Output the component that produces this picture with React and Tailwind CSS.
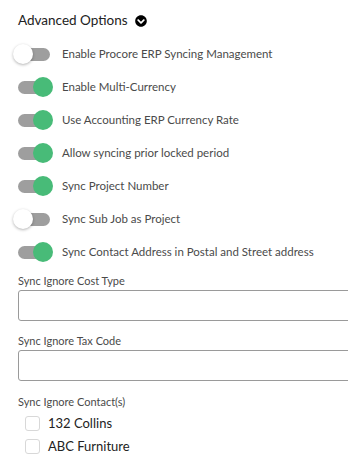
import { FaChevronCircleDown } from "react-icons/fa";

const toggles = [
	{ label: "Enable Procore ERP Syncing Management", on: false },
	{ label: "Enable Multi-Currency", on: true },
	{ label: "Use Accounting ERP Currency Rate", on: true },
	{ label: "Allow syncing prior locked period", on: true },
	{ label: "Sync Project Number", on: true },
	{ label: "Sync Sub Job as Project", on: false },
	{ label: "Sync Contact Address in Postal and Street address", on: true },
];

const Toggle = ({ on }) => (
	<div className="relative w-[40px] h-[20px] flex items-center shrink-0">
		<div className="ml-[6px] w-[32px] h-[13px] rounded-full bg-[#9e9e9e]" />
		{on ? (
			<div className="absolute left-[21px] top-0 w-[20px] h-[20px] rounded-full bg-[#48bb78]" />
		) : (
			<div className="absolute left-[1px] top-0 w-[20px] h-[20px] rounded-full bg-white shadow-[0_1px_3px_rgba(0,0,0,0.3)]" />
		)}
	</div>
);

export default function App() {
	return (
		<div
			className="w-[348px] h-[460px] overflow-hidden bg-white text-[#4a4a4a]"
			style={{ fontFamily: "Lato, 'Open Sans', sans-serif" }}>
			<div className="flex items-center gap-[7px] pl-[18px] pt-[10px] h-[30px]">
				<span className="text-[13.5px] text-[#222]">Advanced Options</span>
				<FaChevronCircleDown className="text-[12px] text-black mt-[1px]" />
			</div>

			<div className="flex flex-col gap-[13px] pl-[12px] mt-[14px]">
				{toggles.map((t) => (
					<div key={t.label} className="flex items-center gap-[10px] h-[20px]">
						<Toggle on={t.on} />
						<span className="text-[11.5px] text-[#4a4a4a] whitespace-nowrap">
							{t.label}
						</span>
					</div>
				))}
			</div>

			<div className="pl-[18px] mt-[12px]">
				<div className="text-[11px] text-[#4a4a4a] leading-[14px]">
					Sync Ignore Cost Type
				</div>
				<div className="mt-[2px] w-[360px] h-[31px] border border-[#9a9a9a] rounded-[3px]" />

				<div className="mt-[13px] text-[11px] text-[#4a4a4a] leading-[14px]">
					Sync Ignore Tax Code
				</div>
				<div className="mt-[2px] w-[360px] h-[31px] border border-[#9a9a9a] rounded-[3px]" />

				<div className="mt-[14px] text-[11px] text-[#4a4a4a] leading-[14px]">
					Sync Ignore Contact(s)
				</div>
				<div className="flex flex-col gap-[8px] mt-[7px] pl-[7px]">
					{["132 Collins", "ABC Furniture", ""].map((c, i) => (
						<div key={i} className="flex items-center gap-[8px] h-[15px]">
							<div className="w-[15px] h-[15px] rounded-[3px] border border-[#d8d8d8] bg-white" />
							<span className="text-[13px] text-[#222]">{c}</span>
						</div>
					))}
				</div>
			</div>
		</div>
	);
}
